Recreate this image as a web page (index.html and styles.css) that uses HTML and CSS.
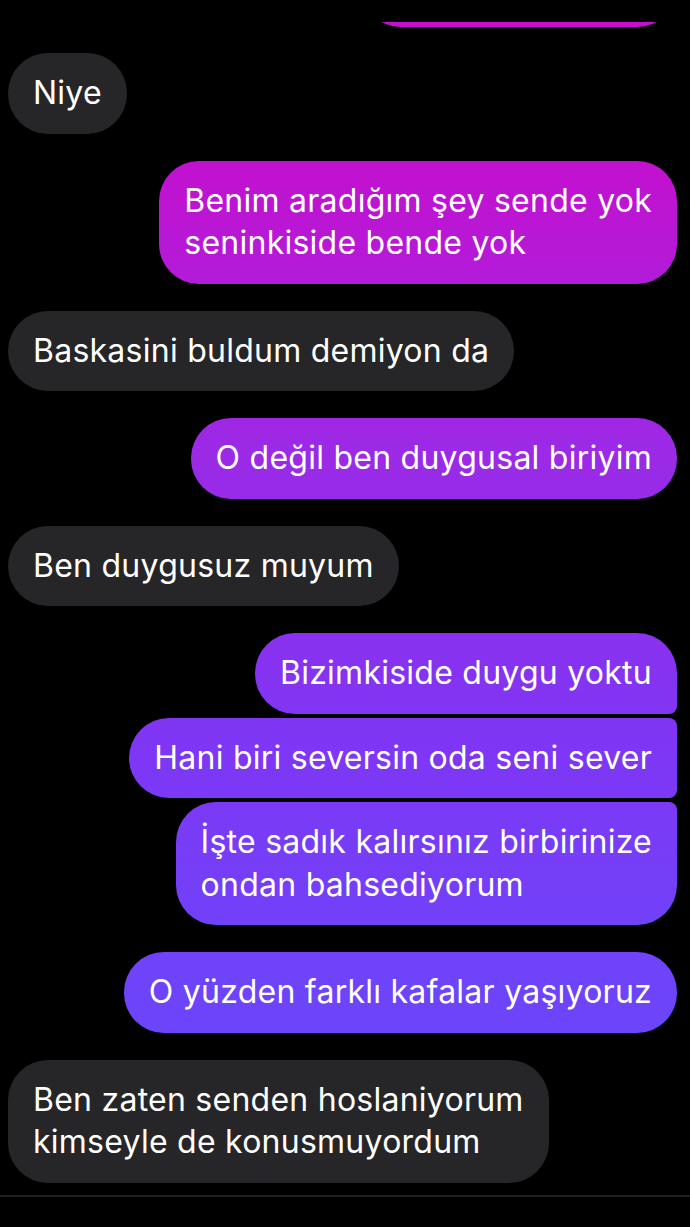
FILE: index.html
```html
<!DOCTYPE html>
<html lang="tr">
<head>
  <meta charset="UTF-8" />
  <meta name="viewport" content="width=device-width, initial-scale=1.0" />
  <title>Sohbet</title>
  <link rel="stylesheet" href="styles.css">
</head>
<body>
  <div class="clip">
    <div class="msg sent peek"></div>
  </div>
  <div class="thread">
    <div class="msg recv">Niye</div>
    <div class="msg sent">Benim aradığım şey sende yok<br>seninkiside bende yok</div>
    <div class="msg recv">Baskasini buldum demiyon da</div>
    <div class="msg sent">O değil ben duygusal biriyim</div>
    <div class="msg recv">Ben duygusuz muyum</div>
    <div class="group">
      <div class="msg sent">Bizimkiside duygu yoktu</div>
      <div class="msg sent">Hani biri seversin oda seni sever</div>
      <div class="msg sent">İşte sadık kalırsınız birbirinize<br>ondan bahsediyorum</div>
    </div>
    <div class="msg sent">O yüzden farklı kafalar yaşıyoruz</div>
    <div class="msg recv">Ben zaten senden hoslaniyorum<br>kimseyle de konusmuyordum</div>
  </div>
  <div class="divider"></div>
</body>
</html>
```

FILE: styles.css
```css
* {
  margin: 0;
  padding: 0;
  box-sizing: border-box;
}

html, body {
  width: 100%;
  height: 100%;
  background: #000;
  color: #fff;
  font-family: Inter, Roboto, sans-serif;
  overflow: hidden;
}

.clip {
  height: 27px;
  display: flex;
  flex-direction: column;
  justify-content: flex-end;
  align-items: flex-end;
  padding-right: 13px;
  overflow: hidden;
}

.clip .peek {
  width: 316px;
  height: 80px;
  flex-shrink: 0;
  clip-path: inset(75px 0 0 0);
}

.thread {
  display: flex;
  flex-direction: column;
  gap: 27px;
  padding: 26px 13px 0 8px;
}

.group {
  display: flex;
  flex-direction: column;
  align-items: flex-end;
  gap: 4px;
}

.msg {
  font-size: 32px;
  letter-spacing: 0.25px;
  line-height: 42.5px;
  padding: 19px 25px 19px;
  border-radius: 40px;
  width: fit-content;
  max-width: 560px;
}

.recv {
  background: #262628;
  align-self: flex-start;
}

.sent {
  align-self: flex-end;
  background: linear-gradient(180deg, #c50fd0 0%, #c112d0 14%, #9b2ae6 37%, #7f36f4 60%, #6e44fa 80%, #6a46fb 100%);
  background-attachment: fixed;
}

.group .msg:first-child {
  border-bottom-right-radius: 8px;
}

.group .msg:nth-child(2) {
  border-top-right-radius: 8px;
  border-bottom-right-radius: 8px;
}

.group .msg:last-child {
  border-top-right-radius: 8px;
}

.divider {
  height: 2px;
  background: #1f1f1f;
  margin-top: 12px;
}
```
